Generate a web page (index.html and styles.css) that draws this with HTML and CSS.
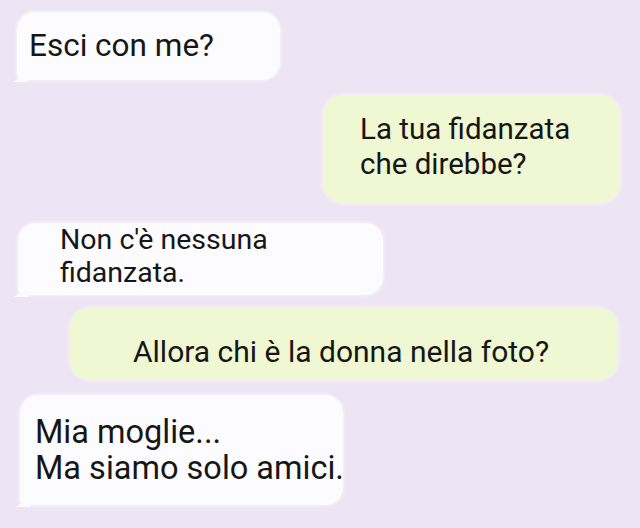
FILE: index.html
```html
<!DOCTYPE html>
<html lang="it">
<head>
<meta charset="utf-8">
<title>Chat</title>
<link rel="stylesheet" href="styles.css">
</head>
<body>
<main class="chat">
  <div class="bubble in b1"><p>Esci con me?</p></div>
  <div class="bubble out b2"><p>La tua fidanzata<br>che direbbe?</p></div>
  <div class="bubble in b3"><p>Non c'è nessuna<br>fidanzata.</p></div>
  <div class="bubble out b4"><p>Allora chi è la donna nella foto?</p></div>
  <div class="bubble in b5"><p>Mia moglie...<br>Ma siamo solo amici.</p></div>
</main>
</body>
</html>
```
FILE: styles.css
```css
html, body {
  margin: 0;
  padding: 0;
}
body {
  width: 640px;
  height: 528px;
  overflow: hidden;
  background: #ede5f4;
  font-family: Roboto, "Noto Sans", sans-serif;
  color: #161616;
}
.chat {
  display: flex;
  flex-direction: column;
  align-items: flex-start;
}
.bubble {
  position: relative;
  box-sizing: border-box;
  border-radius: 18px;
  box-shadow: 0 0 3px 1px rgba(255, 255, 255, 0.55);
  white-space: nowrap;
}
.bubble p {
  margin: 0;
}
.in {
  background: #fcfbfd;
  border-bottom-left-radius: 6px;
}
.in::after {
  content: "";
  position: absolute;
  left: -4px;
  bottom: -2px;
  width: 14px;
  height: 10px;
  background: #fcfbfd;
  clip-path: polygon(0 100%, 100% 0, 100% 100%);
}
.out {
  background: #eff7d3;
  border-radius: 20px;
}
.b1 {
  margin: 12px 0 0 17px;
  width: 263px;
  padding: 17px 0 17px 12px;
  font-size: 31.5px;
  line-height: 34px;
}
.b2 {
  margin: 15px 0 0 323px;
  width: 297px;
  padding: 17px 0 21px 37px;
  font-size: 29.5px;
  line-height: 35px;
}
.b3 {
  margin: 20px 0 0 18px;
  width: 365px;
  padding: 0 0 6px 42px;
  font-size: 28.5px;
  line-height: 33px;
}
.b4 {
  margin: 13px 0 0 70px;
  width: 548px;
  padding: 26px 0 10px 63px;
  font-size: 30px;
  line-height: 36px;
}
.b5 {
  margin: 15px 0 0 20px;
  width: 323px;
  padding: 19px 0 19px 15px;
  font-size: 32.5px;
  line-height: 36px;
}
```
